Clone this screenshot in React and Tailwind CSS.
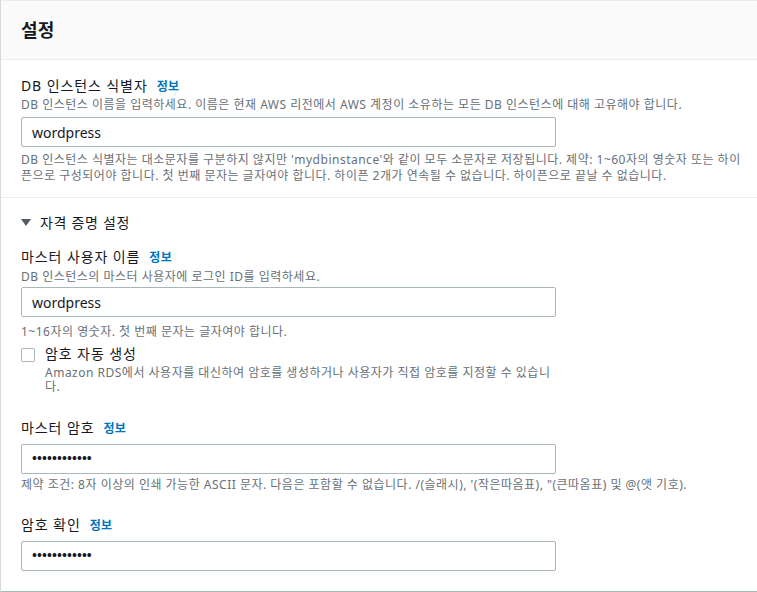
import React from "react";

const font = { fontFamily: '"Noto Sans", "Noto Sans CJK KR", sans-serif' };

function Info() {
  return (
    <span className="ml-[9px] text-[12px] font-bold tracking-[0.3px] text-[#0073bb]">정보</span>
  );
}

function Label({ children }) {
  return (
    <div className="flex items-baseline text-[14px] leading-[20px] tracking-[0.9px] text-[#16191f]">
      <span>{children}</span>
      <Info />
    </div>
  );
}

function Desc({ children, className = "" }) {
  return (
    <div className={"text-[12px] leading-[16px] tracking-[0.5px] text-[#687078] " + className}>
      {children}
    </div>
  );
}

function Input({ value, password, className = "" }) {
  return (
    <div
      className={
        "flex h-[30px] w-[535px] items-center rounded-[2px] border border-[#aab7b8] bg-white px-[10px] text-[14px] text-[#16191f] " +
        className
      }
    >
      {password ? (
        <span className="text-[13px] font-bold tracking-[0.1px]">••••••••••••</span>
      ) : (
        value
      )}
    </div>
  );
}

export default function App() {
  return (
    <div className="h-[592px] w-[757px] overflow-hidden bg-white" style={font}>
      <div className="w-[800px] border-b-2 border-l border-t border-b-[#aab7b8] border-l-[#d5dbdb] border-t-[#eaeded] bg-white">
        <div className="border-b border-[#eaeded] bg-[#fafafa] px-5 py-[18px]">
          <h2 className="text-[18px] font-bold leading-[22px] tracking-[0.3px] text-[#16191f]">설정</h2>
        </div>

        <div className="border-b border-[#eaeded] px-5 pb-[13px] pt-[16px]">
          <Label>DB 인스턴스 식별자</Label>
          <Desc>
            DB 인스턴스 이름을 입력하세요. 이름은 현재 AWS 리전에서 AWS 계정이 소유하는 모든 DB 인스턴스에 대해 고유해야 합니다.
          </Desc>
          <Input value="wordpress" className="mt-[4px]" />
          <Desc className="mt-[5px] w-[723px] leading-[15px]">
            DB 인스턴스 식별자는 대소문자를 구분하지 않지만 'mydbinstance'와 같이 모두 소문자로 저장됩니다. 제약: 1~60자의 영숫자 또는 하이픈으로 구성되어야 합니다. 첫 번째 문자는 글자여야 합니다. 하이픈 2개가 연속될 수 없습니다. 하이픈으로 끝날 수 없습니다.
          </Desc>
        </div>

        <div className="px-5 pb-5 pt-[15px]">
          <div className="flex items-center gap-[9px] text-[14px] leading-[20px] tracking-[0.7px] text-[#16191f]">
            <svg width="10" height="8" viewBox="0 0 10 8">
              <path d="M0 0 L10 0 L5 7 Z" fill="#545b64" />
            </svg>
            <span>자격 증명 설정</span>
          </div>

          <div className="mt-[14px]">
            <Label>마스터 사용자 이름</Label>
            <Desc className="mt-[1px]">DB 인스턴스의 마스터 사용자에 로그인 ID를 입력하세요.</Desc>
            <Input value="wordpress" className="mt-[2px]" />
            <Desc className="mt-[7px]">1~16자의 영숫자. 첫 번째 문자는 글자여야 합니다.</Desc>
          </div>

          <div className="mt-[4px] flex gap-[10px]">
            <div className="mt-[4px] h-[14px] w-[14px] shrink-0 rounded-[2px] border border-[#aab7b8] bg-white" />
            <div className="w-[511px]">
              <div className="text-[14px] leading-[20px] tracking-[0.9px] text-[#16191f]">암호 자동 생성</div>
              <div className="mt-[2px] text-[12px] leading-[14px] tracking-[0.5px] text-[#687078]">
                Amazon RDS에서 사용자를 대신하여 암호를 생성하거나 사용자가 직접 암호를 지정할 수 있습니다.
              </div>
            </div>
          </div>

          <div className="mt-[24px]">
            <Label>마스터 암호</Label>
            <Input password className="mt-[5px]" />
            <Desc className="mt-[3px]">
              제약 조건: 8자 이상의 인쇄 가능한 ASCII 문자. 다음은 포함할 수 없습니다. /(슬래시), '(작은따옴표), "(큰따옴표) 및 @(앳 기호).
            </Desc>
          </div>

          <div className="mt-[22px]">
            <Label>암호 확인</Label>
            <Input password className="mt-[5px]" />
          </div>
        </div>
      </div>
    </div>
  );
}
